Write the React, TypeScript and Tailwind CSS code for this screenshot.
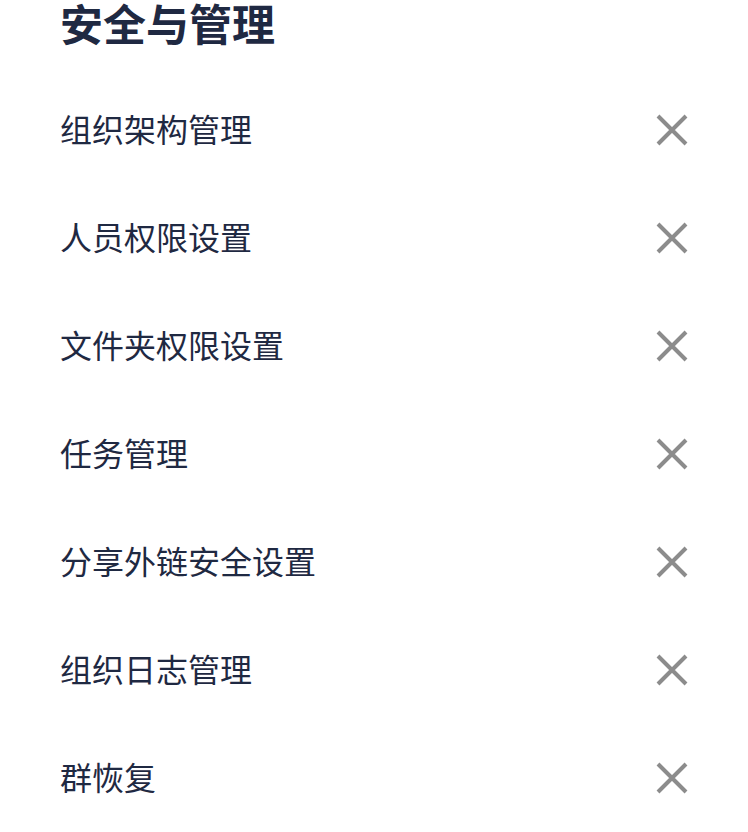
import React from 'react';

const items = [
  '组织架构管理',
  '人员权限设置',
  '文件夹权限设置',
  '任务管理',
  '分享外链安全设置',
  '组织日志管理',
  '群恢复',
];

const CloseIcon = () => (
  <svg width="32" height="32" viewBox="0 0 32 32" fill="none">
    <path d="M2 2L30 30M30 2L2 30" stroke="#8c8c8c" strokeWidth="4" />
  </svg>
);

export default function App() {
  return (
    <div
      className="min-h-screen bg-white pl-[60px] pr-[60px] text-[#1f2942]"
      style={{ fontFamily: '"Noto Sans CJK SC", "Noto Sans", sans-serif' }}
    >
      <h1 className="text-[43px] font-bold leading-[44px]">安全与管理</h1>
      <div className="mt-[32px] flex flex-col">
        {items.map((label) => (
          <div key={label} className="flex h-[108px] items-center justify-between">
            <span className="-mt-[4px] text-[32px] leading-none">{label}</span>
            <CloseIcon />
          </div>
        ))}
      </div>
    </div>
  );
}
